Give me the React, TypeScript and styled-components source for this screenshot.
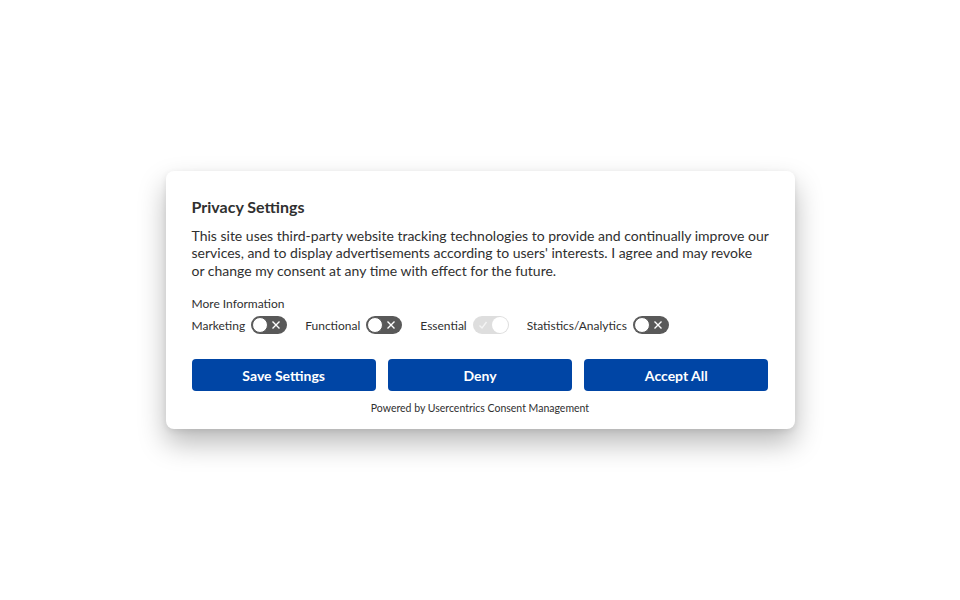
import React from "react";
import styled, { createGlobalStyle } from "styled-components";

const Global = createGlobalStyle`
  html, body { margin: 0; padding: 0; background: #fff; }
  body { font-family: Lato, "Noto Sans", sans-serif; color: #303030; }
`;

const Page = styled.div`
  width: 960px;
  height: 600px;
  display: flex;
  align-items: center;
  justify-content: center;
`;

const Card = styled.div`
  width: 629px;
  box-sizing: border-box;
  padding: 24px 26px 14px 26px;
  background: #fff;
  border-radius: 8px;
  box-shadow: 0 14px 28px rgba(0, 0, 0, 0.28), 0 2px 6px rgba(0, 0, 0, 0.08);
`;

const Title = styled.h2`
  margin: 0 0 8px 0;
  font-size: 16px;
  font-weight: 700;
  line-height: 24px;
  color: #303030;
`;

const Body = styled.p`
  margin: 0 0 17px 0;
  font-size: 14px;
  line-height: 17.5px;
`;

const MoreInfo = styled.div`
  font-size: 12px;
  line-height: 16px;
  margin-bottom: 4px;
`;

const ToggleRow = styled.div`
  display: flex;
  align-items: center;
  gap: 18px;
  margin-bottom: 25px;
`;

const ToggleItem = styled.label`
  display: flex;
  align-items: center;
  gap: 6px;
  font-size: 12px;
`;

const Switch = styled.span<{ $disabled?: boolean }>`
  position: relative;
  width: 36px;
  height: 18px;
  border-radius: 9px;
  background: ${(p) => (p.$disabled ? "#dedede" : "#595959")};
  display: inline-block;
  box-sizing: border-box;
`;

const Knob = styled.span<{ $on?: boolean }>`
  position: absolute;
  top: 1px;
  ${(p) => (p.$on ? "right: 1px;" : "left: 1px;")}
  width: 16px;
  height: 16px;
  border-radius: 50%;
  background: #fff;
  box-sizing: border-box;
  border: ${(p) => (p.$on ? "none" : "1.5px solid #595959")};
`;

const Glyph = styled.svg<{ $on?: boolean }>`
  position: absolute;
  top: 4px;
  ${(p) => (p.$on ? "left: 5px;" : "right: 6px;")}
`;

const Buttons = styled.div`
  display: grid;
  grid-template-columns: repeat(3, 1fr);
  gap: 12px;
  margin-bottom: 10px;
`;

const Button = styled.button`
  height: 32px;
  border: none;
  border-radius: 4px;
  background: #0045a5;
  color: #fff;
  font-family: Lato, "Noto Sans", sans-serif;
  font-size: 14px;
  font-weight: 700;
  cursor: pointer;
`;

const Powered = styled.div`
  text-align: center;
  font-size: 10.5px;
  line-height: 14px;
  color: #303030;
`;

function Toggle({ label, disabled }: { label: string; disabled?: boolean }) {
  const on = !!disabled;
  return (
    <ToggleItem>
      {label}
      <Switch $disabled={disabled}>
        {on ? (
          <Glyph $on width="10" height="10" viewBox="0 0 10 10">
            <path d="M1.5 5.5 L4 8 L8.5 2" stroke="#f4f4f4" strokeWidth="1.4" fill="none" />
          </Glyph>
        ) : (
          <Glyph width="10" height="10" viewBox="0 0 10 10">
            <path d="M1.5 1.5 L8.5 8.5 M8.5 1.5 L1.5 8.5" stroke="#fff" strokeWidth="1.4" fill="none" />
          </Glyph>
        )}
        <Knob $on={on} />
      </Switch>
    </ToggleItem>
  );
}

export default function App() {
  return (
    <>
      <Global />
      <Page>
        <Card>
          <Title>Privacy Settings</Title>
          <Body>
            This site uses third-party website tracking technologies to provide and continually improve our
            services, and to display advertisements according to users' interests. I agree and may revoke
            <br />
            or change my consent at any time with effect for the future.
          </Body>
          <MoreInfo>More Information</MoreInfo>
          <ToggleRow>
            <Toggle label="Marketing" />
            <Toggle label="Functional" />
            <Toggle label="Essential" disabled />
            <Toggle label="Statistics/Analytics" />
          </ToggleRow>
          <Buttons>
            <Button>Save Settings</Button>
            <Button>Deny</Button>
            <Button>Accept All</Button>
          </Buttons>
          <Powered>Powered by Usercentrics Consent Management</Powered>
        </Card>
      </Page>
    </>
  );
}
